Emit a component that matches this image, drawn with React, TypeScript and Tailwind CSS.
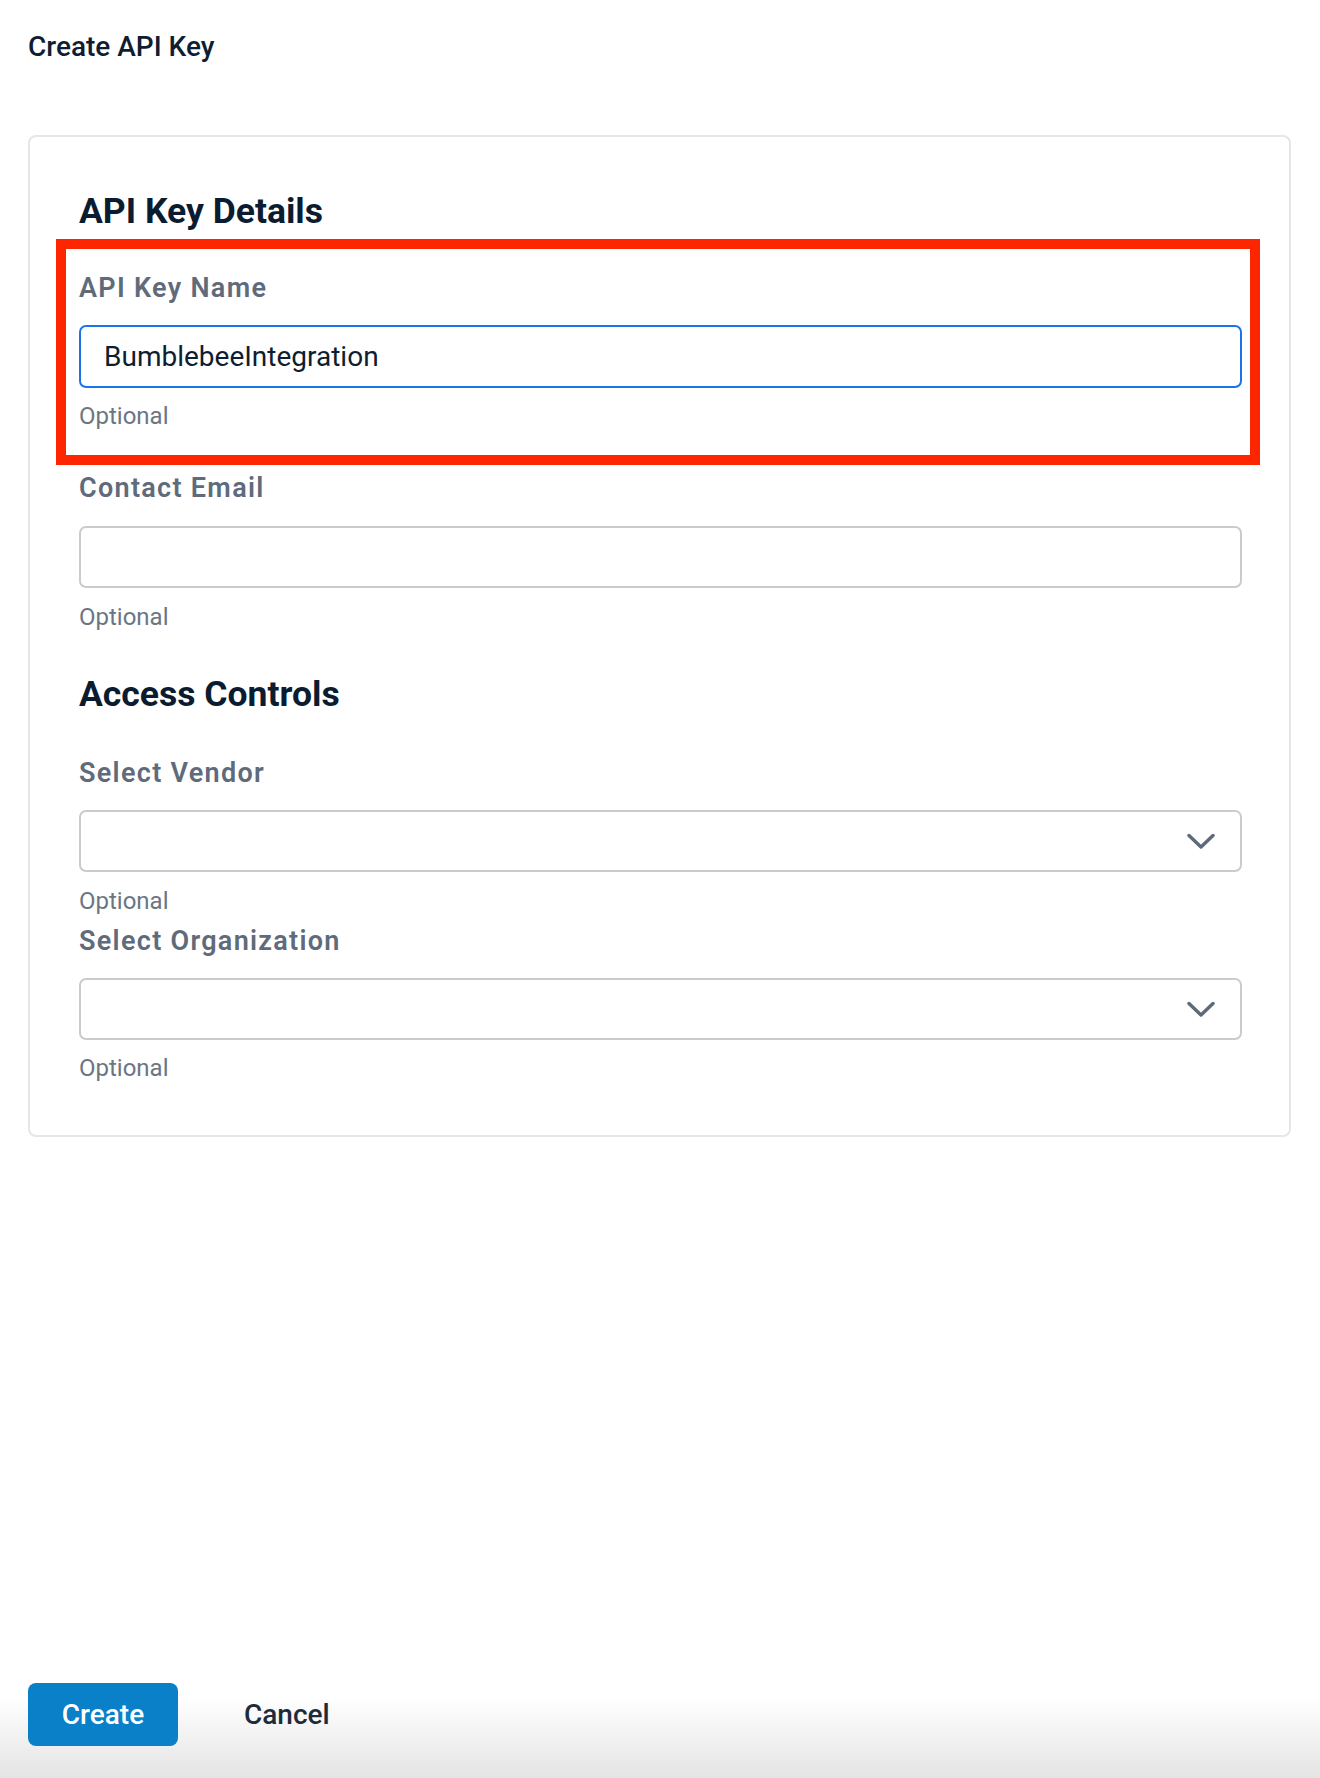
import React from "react";

const font = { fontFamily: "Roboto, 'Open Sans', Arial, sans-serif" };

function Chevron() {
  return (
    <svg width="28" height="17" viewBox="0 0 28 17" fill="none" className="shrink-0">
      <polyline points="2,2.5 14,14 26,2.5" stroke="#5d6a79" strokeWidth="3.4" strokeLinecap="round" strokeLinejoin="round" fill="none" />
    </svg>
  );
}

function Label({ children, className = "" }: { children: React.ReactNode; className?: string }) {
  return (
    <div className={`text-[27px] leading-[30px] font-semibold tracking-[1.3px] text-[#5f6b7b] ${className}`}>
      {children}
    </div>
  );
}

function Optional({ className = "" }: { className?: string }) {
  return <div className={`text-[24px] leading-[28px] text-[#6b7684] ${className}`}>Optional</div>;
}

function SelectBox({ className = "" }: { className?: string }) {
  return (
    <div
      className={`h-[62px] w-full rounded-[7px] border-2 border-[#cbcbcb] bg-white flex items-center justify-end pr-[25px] ${className}`}
    >
      <Chevron />
    </div>
  );
}

export default function App() {
  return (
    <div style={font} className="min-h-[1778px] w-full bg-white flex flex-col">
      <div className="pl-[28px] pr-[29px] pt-[31px]">
        <h1 className="text-[28px] leading-[32px] font-medium text-[#0e1d2f]">Create API Key</h1>

        <div className="mt-[72px] rounded-[8px] border-2 border-[#e6e6e6] pl-[49px] pr-[47px] pt-[53px] pb-[53px]">
          <h2 className="text-[35.5px] leading-[42px] font-bold text-[#0b1c30]">API Key Details</h2>

          <div className="relative mt-[41px]">
            <Label>API Key Name</Label>
            <div className="mt-[22px] h-[63px] w-full rounded-[7px] border-2 border-[#1b73e8] bg-white flex items-center pl-[23px]">
              <span className="text-[28px] text-[#0e1d2f]">BumblebeeIntegration</span>
            </div>
            <Optional className="mt-[14px]" />
            <span className="pointer-events-none absolute -left-[23px] -top-[34px] -right-[18px] -bottom-[35px] border-[10px] border-[#fe2600]" />
          </div>

          <Label className="mt-[43px]">Contact Email</Label>
          <div className="mt-[23px] h-[62px] w-full rounded-[7px] border-2 border-[#cbcbcb] bg-white" />
          <Optional className="mt-[15px]" />

          <h2 className="mt-[42px] text-[35.5px] leading-[42px] font-bold text-[#0b1c30]">Access Controls</h2>

          <Label className="mt-[43px]">Select Vendor</Label>
          <SelectBox className="mt-[22px]" />
          <Optional className="mt-[15px]" />

          <Label className="mt-[11px]">Select Organization</Label>
          <SelectBox className="mt-[22px]" />
          <Optional className="mt-[14px]" />
        </div>
      </div>

      <div className="mt-auto pl-[28px] pt-[30px] pb-[32px] bg-linear-to-b from-white from-35% to-[#e4e4e4]">
        <div className="flex items-center">
          <button className="h-[63px] w-[150px] rounded-[8px] bg-[#0a80c9] text-white text-[28px] font-medium">
            Create
          </button>
          <button className="ml-[66px] text-[28px] font-medium text-[#1e2b3c]">Cancel</button>
        </div>
      </div>
    </div>
  );
}
